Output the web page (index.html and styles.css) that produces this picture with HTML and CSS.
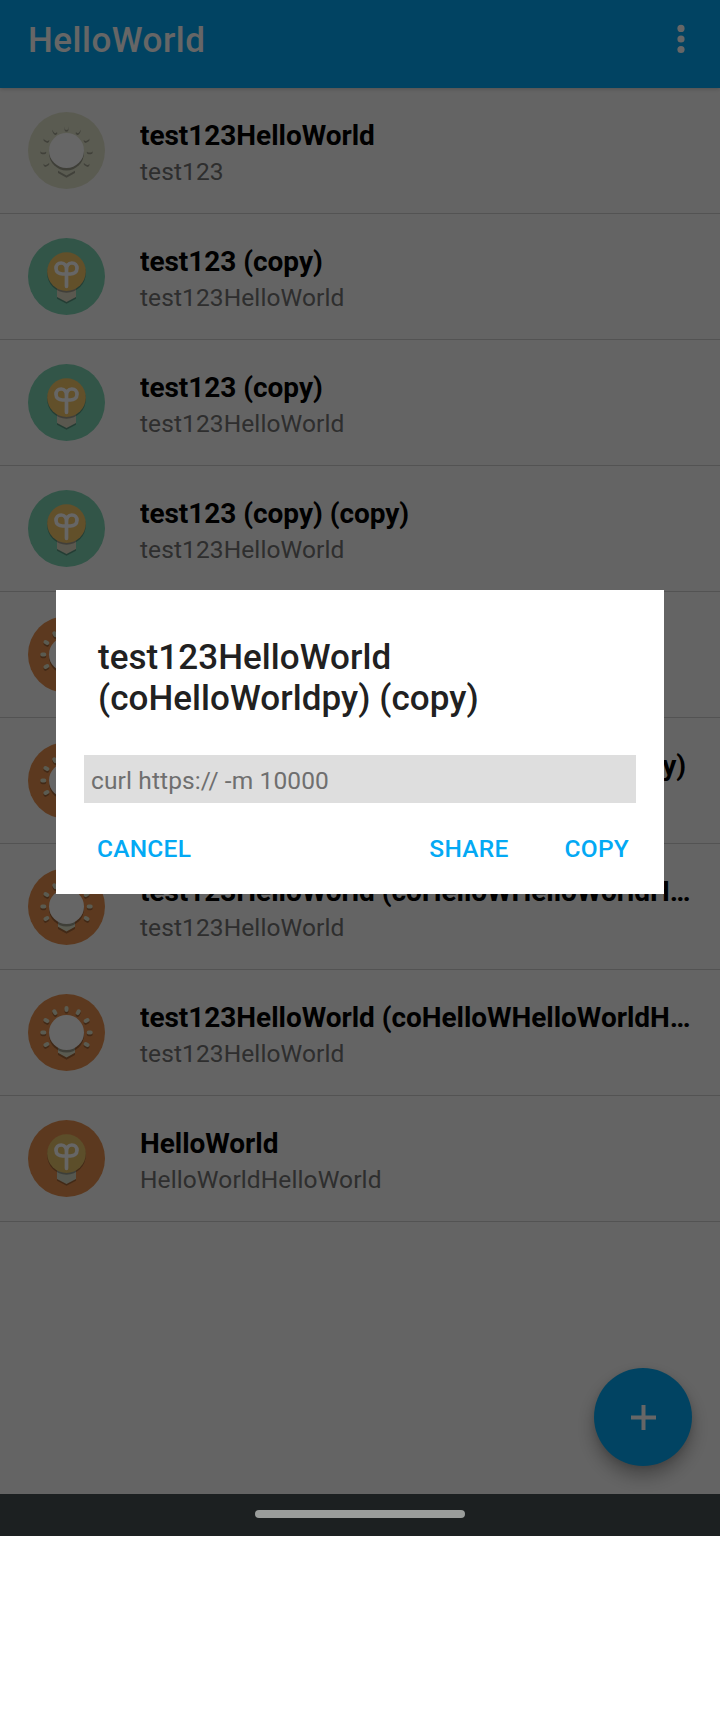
FILE: index.html
```html
<!DOCTYPE html>
<html lang="en">
<head>
<meta charset="utf-8">
<title>HelloWorld</title>
<link rel="stylesheet" href="styles.css">
</head>
<body>
<svg class="defs" aria-hidden="true">
  <defs>
    <g id="rays">
      <path d="M38.5 14v2M26.300 17.300l1 1.800M50.700 17.300l-1 1.800M17.500 26l1.800 1M59.500 26l-1.800 1M14.300 38.500h2M60.700 38.500h2M17.500 51l1.800-1M59.500 51l-1.800-1"/>
    </g>
    <symbol id="sun" viewBox="0 0 77 77">
      <circle cx="38.5" cy="38.5" r="38.5" fill="currentColor"/>
      <g fill="none" stroke-width="4" stroke-linecap="round">
        <use href="#rays" y="1.8" stroke="#000" stroke-opacity=".28"/>
        <use href="#rays" stroke="#e1e3cb"/>
      </g>
      <path d="M30 53h17v8l-8.500 4.800L30 61z" fill="#000" fill-opacity=".28"/>
      <path d="M30 51.500h17v7.300l-8.500 4.800L30 58.800z" fill="#e1e3cb"/>
      <circle cx="38.500" cy="41" r="17.500" fill="#000" fill-opacity=".3"/>
      <circle cx="38.500" cy="38.500" r="17.500" fill="#fff"/>
    </symbol>
    <symbol id="sprout" viewBox="0 0 77 77">
      <circle cx="38.500" cy="38.500" r="38.500" fill="currentColor"/>
      <path d="M29 50h19v10.800l-9.500 5L29 60.800z" fill="#000" fill-opacity=".28"/>
      <path class="socket" d="M29 50h19v9l-9.500 5L29 59z"/>
      <circle cx="38.500" cy="35.400" r="19.300" fill="#000" fill-opacity=".28"/>
      <circle class="glass" cx="38.500" cy="33.600" r="19.300"/>
      <path d="M38.500 48.300V31.500c0-3.800-1.800-6.500-5.300-6.500-3.200 0-5.200 2.200-5.200 5.300 0 3.900 3.300 5.700 6.500 5.700h8c3.200 0 6.500-1.800 6.500-5.700 0-3.100-2-5.300-5.200-5.300-3.500 0-5.300 2.700-5.300 6.500" fill="none" stroke="#fff" stroke-width="3.700" stroke-linecap="round"/>
    </symbol>
  </defs>
</svg>
<div class="screen">
  <div class="app">
    <header class="toolbar">
      <h1 class="toolbar-title">HelloWorld</h1>
      <svg class="more" viewBox="0 0 8 30"><circle cx="4" cy="4.400" r="3.600"/><circle cx="4" cy="15" r="3.600"/><circle cx="4" cy="25.500" r="3.600"/></svg>
    </header>
    <main class="list">
      <div class="row"><svg class="icon pale"><use href="#sun"/></svg><div class="text"><div class="title">test123HelloWorld</div><div class="sub">test123</div></div></div>
      <div class="row"><svg class="icon green"><use href="#sprout"/></svg><div class="text"><div class="title">test123 (copy)</div><div class="sub">test123HelloWorld</div></div></div>
      <div class="row"><svg class="icon green"><use href="#sprout"/></svg><div class="text"><div class="title">test123 (copy)</div><div class="sub">test123HelloWorld</div></div></div>
      <div class="row"><svg class="icon green"><use href="#sprout"/></svg><div class="text"><div class="title">test123 (copy) (copy)</div><div class="sub">test123HelloWorld</div></div></div>
      <div class="row"><svg class="icon orange"><use href="#sun"/></svg></div>
      <div class="row"><svg class="icon orange"><use href="#sun"/></svg><div class="text"><div class="title">test123HelloWorld (coHelloWorldpy) (copy)</div></div></div>
      <div class="row"><svg class="icon orange"><use href="#sun"/></svg><div class="text"><div class="title">test123HelloWorld (coHelloWHelloWorldH…</div><div class="sub">test123HelloWorld</div></div></div>
      <div class="row"><svg class="icon orange"><use href="#sun"/></svg><div class="text"><div class="title">test123HelloWorld (coHelloWHelloWorldH…</div><div class="sub">test123HelloWorld</div></div></div>
      <div class="row"><svg class="icon orange mint"><use href="#sprout"/></svg><div class="text"><div class="title">HelloWorld</div><div class="sub">HelloWorldHelloWorld</div></div></div>
    </main>
    <button class="fab" aria-label="Add"><svg class="plus" viewBox="0 0 25 25"><path d="M12.500 0v25M0 12.500h25"/></svg></button>
  </div>
  <div class="scrim">
    <section class="dialog">
      <h2 class="dialog-title">test123HelloWorld (coHelloWorldpy) (copy)</h2>
      <div class="command">curl https:// -m 10000</div>
      <div class="actions"><button class="action cancel">CANCEL</button><button class="action share">SHARE</button><button class="action">COPY</button></div>
    </section>
  </div>
</div>
<div class="navbar"><div class="handle"></div></div>
</body>
</html>
```

FILE: styles.css
```css
* { box-sizing: border-box; }
body { margin: 0; background: #fff; font-family: Roboto, "Liberation Sans", sans-serif; }
button { border: 0; background: none; padding: 0; font: inherit; }
h1, h2 { margin: 0; font-weight: 500; }
.defs { position: absolute; width: 0; height: 0; }

.screen { position: relative; width: 720px; height: 1494px; overflow: hidden; }
.app { height: 100%; background: #fafafa; }

.toolbar {
  position: relative;
  display: flex;
  justify-content: space-between;
  height: 88px;
  padding: 20px 35px 0 28px;
  background: #03a9f4;
  box-shadow: 0 1px 4px rgba(0, 0, 0, .2);
}
.toolbar-title { font-size: 35px; line-height: 41px; letter-spacing: .5px; color: #fff; }
.more { width: 8px; height: 30px; margin-top: 4px; fill: #fff; }

.row {
  display: flex;
  gap: 35px;
  height: 126px;
  padding: 24px 28px 0;
  border-bottom: 1px solid #d0d0d0;
}
.icon { flex: none; width: 77px; height: 77px; }
.pale { color: #e1e3cb; }
.green { color: #7dd4b4; --socket: #e1dcc6; --glass: #f5c769; }
.orange { color: #e6904f; }
.mint { --socket: #d5dac6; --glass: #e6c469; }
.socket { fill: var(--socket); }
.glass { fill: var(--glass); }
.text { min-width: 0; padding-top: 7px; }
.title {
  overflow: hidden;
  font-size: 28px;
  font-weight: 700;
  line-height: 33px;
  letter-spacing: -.04px;
  white-space: nowrap;
  text-overflow: ellipsis;
  color: #000;
}
.sub { margin-top: 5px; font-size: 24.5px; line-height: 29px; letter-spacing: .1px; color: #737373; }

.fab {
  position: absolute;
  right: 28px;
  bottom: 28px;
  display: grid;
  place-items: center;
  width: 98px;
  height: 98px;
  border-radius: 50%;
  background: #03a9f4;
  box-shadow: 0 10px 18px rgba(0, 0, 0, .3), 0 2px 6px rgba(0, 0, 0, .1);
}
.plus { width: 25px; height: 25px; stroke: #fff; stroke-width: 4; }

.scrim {
  position: absolute;
  inset: 0;
  padding: 590px 56px 0;
  background: rgba(0, 0, 0, .6);
}
.dialog { height: 304px; padding: 47px 28px 0; background: #fff; }
.dialog-title { padding: 0 14px; font-size: 35px; line-height: 41px; letter-spacing: .06px; color: #212121; }
.command {
  height: 48px;
  margin-top: 36px;
  padding: 11px 7px 0;
  background: #dedede;
  font-size: 24.5px;
  line-height: 29px;
  letter-spacing: .12px;
  color: #6f6f6f;
}
.actions { display: flex; gap: 56px; padding: 32px 7px 0 13px; }
.action { font-size: 24.5px; font-weight: 500; line-height: 28px; letter-spacing: .25px; color: #03a9f4; }
.cancel { margin-right: auto; }

.navbar { height: 42px; padding-top: 16px; background: #1c2021; }
.handle { width: 210px; height: 8px; margin: 0 auto; border-radius: 4px; background: #9a9d9b; }
```
